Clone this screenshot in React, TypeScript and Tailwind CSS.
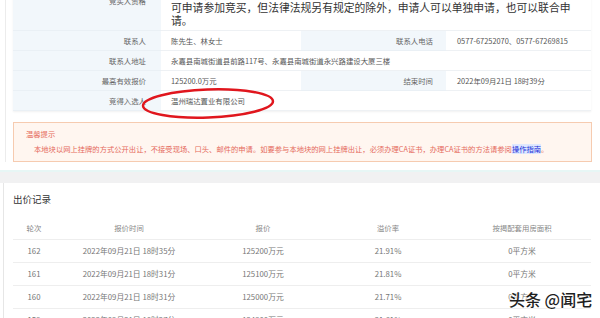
import React from 'react';

const font = "font-['Noto_Sans_CJK_SC','Liberation_Sans',sans-serif]";

const bids = [
    { round: '162', time: '2022年09月21日 18时35分', price: '125200万元', rate: '21.91%', area: '0平方米' },
    { round: '161', time: '2022年09月21日 18时31分', price: '125100万元', rate: '21.81%', area: '0平方米' },
    { round: '160', time: '2022年09月21日 18时31分', price: '125000万元', rate: '21.71%', area: '0平方米' },
    { round: '159', time: '2022年09月21日 18时27分', price: '124900万元', rate: '21.61%', area: '0平方米' },
];

const Label = ({ children, pr = 'pr-[15px]' }: { children: React.ReactNode; pr?: string }) => (
    <div className={`bg-[#f2f7fb] flex items-center justify-end ${pr} text-[7.4px] text-[#666] border-b border-[#eaf0f5] whitespace-nowrap`}>
        {children}
    </div>
);

const Value = ({ children, span, pl = 'pl-[10px]' }: { children: React.ReactNode; span?: boolean; pl?: string }) => (
    <div className={`flex items-center ${pl} text-[7.4px] text-[#555] border-b border-[#eef1f4] whitespace-nowrap ${span ? 'col-span-3' : ''}`}>
        {children}
    </div>
);

export default function App() {
    return (
        <div className={`relative w-[600px] h-[318px] overflow-hidden bg-white ${font}`}>
            {/* 地块信息 */}
            <div className="pl-[5px]">
                <div className="border-l border-[#ececec] pl-[7px]">
                    <div className="-mt-[29px] w-[578px] grid grid-cols-[148px_140px_145px_145px] grid-rows-[60px_20px_20px_20px_20px] shadow-[0_1px_2px_rgba(0,0,0,0.06)]">
                        <Label>竞买人资格</Label>
                        <div className="col-span-3 pl-[10px] py-[4px] text-[10.8px] leading-[13px] text-[#333] border-b border-[#eef1f4] whitespace-nowrap overflow-hidden">
                            <div>中华人民共和国境内外的法人、自然人和其他组织，除法律法规另有</div>
                            <div>规定外，均可申请参加。申请人应当单独申请，不接受联合申请，</div>
                            <div>可申请参加竞买，但法律法规另有规定的除外，申请人可以单独申请，也可以联合申</div>
                            <div>请。</div>
                        </div>

                        <Label>联系人</Label>
                        <Value>陈先生、林女士</Value>
                        <Label pr="pr-[13px]">联系人电话</Label>
                        <Value pl="pl-[11px]">0577-67252070、0577-67269815</Value>

                        <Label>联系人地址</Label>
                        <Value span>永嘉县南城街道县前路117号、永嘉县南城街道永兴路建设大厦三楼</Value>

                        <Label>最高有效报价</Label>
                        <Value>125200.0万元</Value>
                        <Label pr="pr-[13px]">结束时间</Label>
                        <Value pl="pl-[11px]">2022年09月21日 18时39分</Value>

                        <Label>竞得入选人</Label>
                        <Value span>温州瑞达置业有限公司</Value>
                    </div>

                    {/* 温馨提示 */}
                    <div className="mt-[11px] w-[579px] h-[40px] bg-[#fff6f0] border border-[#f6cbb0] pl-[12px] pt-[6px] text-[7.3px] text-[#e56a5c]">
                        <div className="leading-[10px]">温馨提示</div>
                        <div className="pl-[8px] mt-[5px] leading-[10px] whitespace-nowrap">
                            本地块以网上挂牌的方式公开出让，不接受现场、口头、邮件的申请。如要参与本地块的网上挂牌出让，必须办理CA证书，办理CA证书的方法请参阅
                            <span className="text-[#1b2fd8] bg-[#dfe8ff]">操作指南</span>。
                        </div>
                    </div>
                </div>
            </div>

            <div className="h-[8px]" />
            <div className="h-[2px] bg-[#e7f6f5]" />
            <div className="h-[11px] bg-[#f1f1f2]" />

            {/* 出价记录 */}
            <div className="ml-[3px] border-l border-[#e6e6e6] pl-[9px]">
                <div className="pt-[11px] text-[9.5px] leading-[10px] text-[#333]">出价记录</div>
                <div className="mt-[12px] w-[578px]">
                    <div className="grid grid-cols-[42px_148px_120px_130px_138px] h-[24px] items-center text-center text-[7.4px] text-[#888] border-b border-[#eeeeee]">
                        <div>轮次</div>
                        <div>报价时间</div>
                        <div>报价</div>
                        <div>溢价率</div>
                        <div>按揭配套用房面积</div>
                    </div>
                    {bids.map((b) => (
                        <div
                            key={b.round}
                            className="grid grid-cols-[42px_148px_120px_130px_138px] h-[23px] items-center text-center text-[7.8px] text-[#777] border-b border-[#eeeeee] whitespace-nowrap"
                        >
                            <div>{b.round}</div>
                            <div>{b.time}</div>
                            <div>{b.price}</div>
                            <div>{b.rate}</div>
                            <div>{b.area}</div>
                        </div>
                    ))}
                </div>
            </div>

            {/* 红圈标注 */}
            <svg className="absolute left-[140px] top-[86px]" width="140" height="36" viewBox="0 0 140 36">
                <ellipse cx="68" cy="17.5" rx="65" ry="14" fill="none" stroke="#e0161d" strokeWidth="2.5" transform="rotate(-2 68 17.5)" />
            </svg>

            {/* 水印 */}
            <div className="absolute left-[509px] top-[289px] text-[16px] leading-[20px] font-medium text-[#1f1f1f] whitespace-nowrap [text-shadow:0_0_2px_#fff,0_0_2px_#fff,0_0_3px_#fff]">
                头条 @闻宅
            </div>
        </div>
    );
}
